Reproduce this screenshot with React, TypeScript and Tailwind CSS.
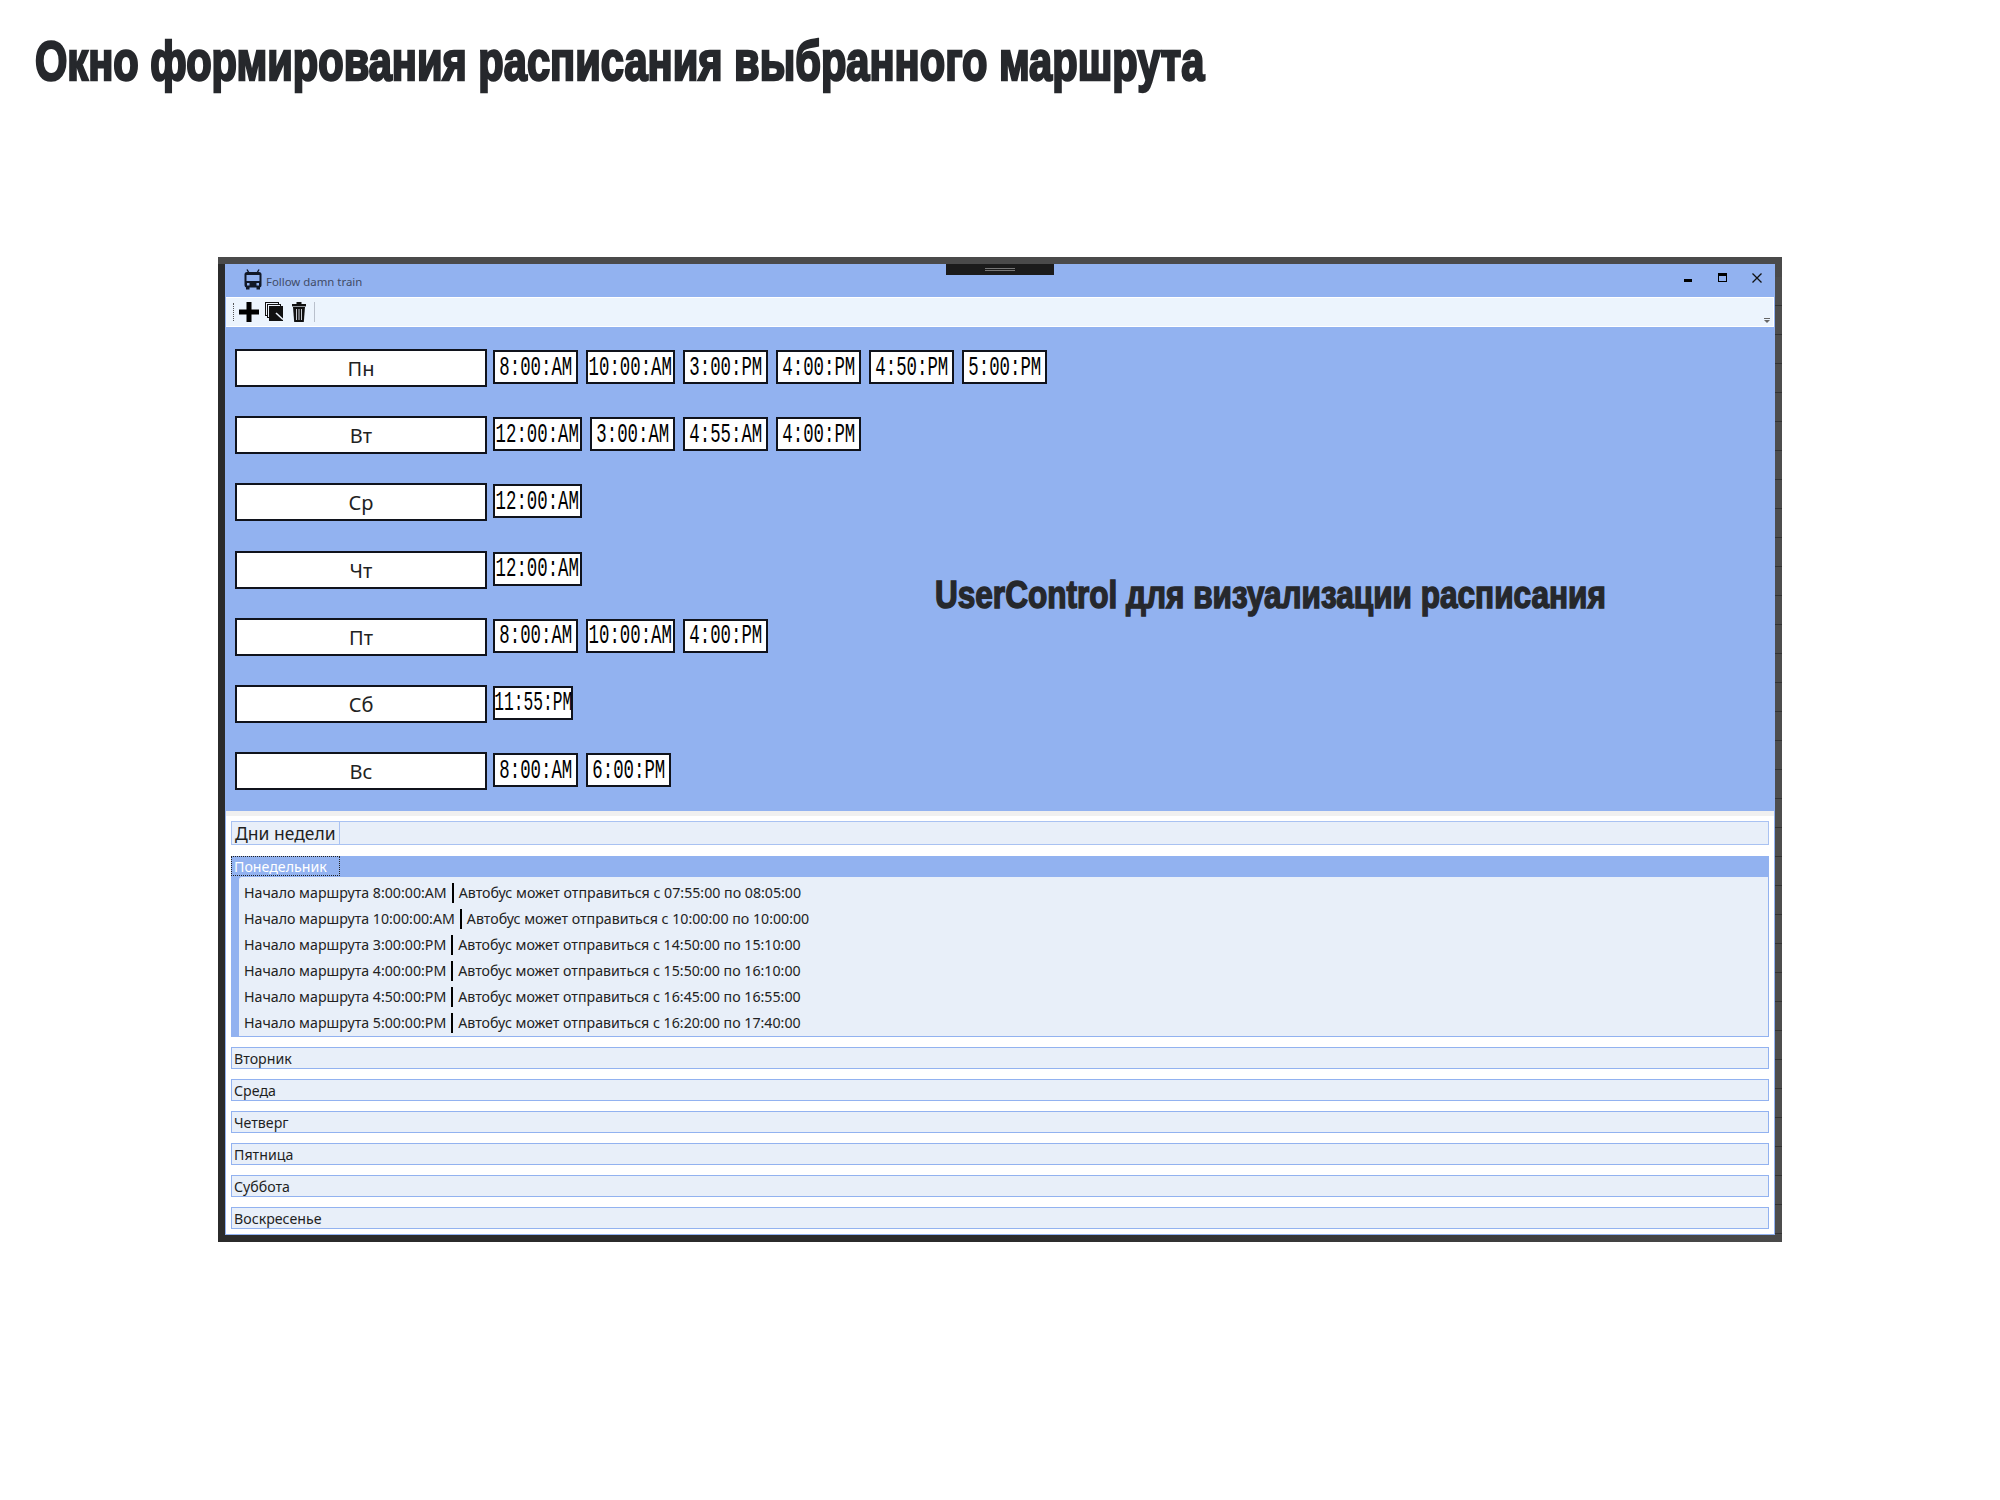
import React from 'react';

const monday = [
  ['8:00:00:AM', '07:55:00', '08:05:00'],
  ['10:00:00:AM', '10:00:00', '10:00:00'],
  ['3:00:00:PM', '14:50:00', '15:10:00'],
  ['4:00:00:PM', '15:50:00', '16:10:00'],
  ['4:50:00:PM', '16:45:00', '16:55:00'],
  ['5:00:00:PM', '16:20:00', '17:40:00'],
];

const schedule = [
  { day: 'Пн', times: ['8:00:AM', '10:00:AM', '3:00:PM', '4:00:PM', '4:50:PM', '5:00:PM'] },
  { day: 'Вт', times: ['12:00:AM', '3:00:AM', '4:55:AM', '4:00:PM'] },
  { day: 'Ср', times: ['12:00:AM'] },
  { day: 'Чт', times: ['12:00:AM'] },
  { day: 'Пт', times: ['8:00:AM', '10:00:AM', '4:00:PM'] },
  { day: 'Сб', times: ['11:55:PM'] },
  { day: 'Вс', times: ['8:00:AM', '6:00:PM'] },
];

const collapsed = ['Вторник', 'Среда', 'Четверг', 'Пятница', 'Суббота', 'Воскресенье'];

// width depends on the leading digits, same as the autosized control in the shot
const clockWidth = (t: string) => {
  if (t.startsWith('11')) return 'w-[80px]';
  if (t.startsWith('10') || t.startsWith('12')) return 'w-[89px]';
  return 'w-[85px]';
};

const BusIcon = () => (
  <svg width="20" height="22" viewBox="0 0 20 22">
    <path d="M6 4 L4 0.5 M14 4 L16 0.5" stroke="#111827" strokeWidth="1.4" />
    <rect x="1.5" y="3" width="17" height="15.5" rx="2.5" fill="#111827" />
    <rect x="3.5" y="6" width="13" height="6" fill="#92b2f0" />
    <rect x="4" y="14" width="2.5" height="2.5" fill="#92b2f0" />
    <rect x="13.5" y="14" width="2.5" height="2.5" fill="#92b2f0" />
    <rect x="3" y="18" width="3.5" height="2.5" fill="#111827" />
    <rect x="13.5" y="18" width="3.5" height="2.5" fill="#111827" />
  </svg>
);

const CopyIcon = () => (
  <svg width="20" height="20" viewBox="0 0 20 20">
    <rect x="0.5" y="0.5" width="13" height="13" fill="#eef4fd" stroke="#111" />
    <rect x="2.5" y="2.5" width="13" height="13" fill="#eef4fd" stroke="#111" />
    <rect x="4" y="4" width="14" height="15" fill="#111" />
    <path d="M11 11 L18 17.5" stroke="#eef4fd" strokeWidth="1.6" />
  </svg>
);

const TrashIcon = () => (
  <svg width="14" height="20" viewBox="0 0 14 20">
    <rect x="0" y="2" width="14" height="2.4" fill="#111" />
    <rect x="4.5" y="0" width="5" height="2.4" fill="#111" />
    <path d="M1 5 H13 L11.8 20 H2.2 Z" fill="#111" />
    <path d="M4.5 7 V18 M7 7 V18 M9.5 7 V18" stroke="#c9cdd4" strokeWidth="1" />
  </svg>
);

const App: React.FC = () => {
  return (
    <div className="w-[2000px] h-[1500px] bg-white font-['Noto_Sans',sans-serif] text-[#1f1f1f] overflow-hidden">
      {/* Slide heading */}
      <div className="h-[257px] pl-[35px] pt-[28px]">
        <h1 className="origin-left scale-x-[0.743] font-['Liberation_Sans',sans-serif] font-bold text-[56px] leading-[66px] text-[#26282c] whitespace-nowrap [-webkit-text-stroke:2.5px_#26282c]">
          Окно формирования расписания выбранного маршрута
        </h1>
      </div>

      {/* Screenshot frame */}
      <div className="relative ml-[218px] w-[1564px] h-[985px] bg-[linear-gradient(to_right,#2b2b2b_0,#2b2b2b_50%,#4a4a4a_100%)] px-[7px] py-[7px]">
        <div className="absolute right-0 top-[20px] bottom-[7px] w-[7px] bg-[repeating-linear-gradient(to_bottom,#4d4d4d_0,#4d4d4d_28px,#333333_28px,#333333_29px)]" />
        <div className="absolute left-0 right-0 top-0 h-[7px] bg-[#4a4a4a]" />
        <div className="relative flex flex-col h-[971px] bg-white border-b border-x border-[#92b2f0]">
          <div className="absolute left-1/2 -translate-x-1/2 top-0 w-[108px] h-[11px] bg-[#1b1b1b] flex justify-center pt-[4px]">
            <div className="w-[30px] h-[3px] border-y border-[#777]" />
          </div>

          {/* Title bar */}
          <div className="flex items-center h-[33px] bg-[#92b2f0] pl-[17px] pr-[12px]">
            <div className="-mt-[2px]"><BusIcon /></div>
            <span className="ml-[3px] mt-[2px] text-[11.4px] text-[#3f4a66]">Follow damn train</span>
            <div className="ml-auto flex items-center text-black">
              <div className="w-[8px] h-[3px] bg-black mr-[26px]" />
              <div className="w-[9px] h-[9px] border border-black border-t-[3px] mr-[25px] -mt-[6px]" />
              <svg width="10" height="10" viewBox="0 0 10 10" className="-mt-[6px]">
                <path d="M0.5 0.5 L9.5 9.5 M9.5 0.5 L0.5 9.5" stroke="#111" strokeWidth="1.3" />
              </svg>
            </div>
          </div>

          {/* Toolbar */}
          <div className="relative flex items-center h-[30px] bg-[#ecf4fd] border-y border-white pl-[7px] mr-[1px]">
            <div className="w-[1px] h-[18px] border-l border-dotted border-[#555]" />
            <svg width="20" height="20" viewBox="0 0 20 20" className="ml-[5px]">
              <path d="M7.5 0 H12.5 V7.5 H20 V12.5 H12.5 V20 H7.5 V12.5 H0 V7.5 H7.5 Z" fill="#000" />
            </svg>
            <div className="ml-[6px]"><CopyIcon /></div>
            <div className="ml-[7px]"><TrashIcon /></div>
            <div className="ml-[8px] w-[1px] h-[20px] bg-[#b9c0cc]" />
            <div className="absolute right-[3px] bottom-[3px] flex flex-col items-center gap-[1px]">
              <div className="w-[6px] h-[1px] bg-[#666]" />
              <div className="w-0 h-0 border-x-[3px] border-x-transparent border-t-[3px] border-t-[#666]" />
            </div>
          </div>

          {/* Schedule visualisation */}
          <div className="relative h-[484px] bg-[#92b2f0] pl-[9px] pt-[22px] flex flex-col gap-[29.2px]">
            {schedule.map((row) => (
              <div key={row.day} className="flex items-center h-[38px]">
                <div className="w-[252px] h-[38px] bg-white border-2 border-[#10131c] flex items-center justify-center text-[20px] text-[#222] pt-[2px]">
                  {row.day}
                </div>
                <div className="flex gap-[8px] ml-[6px] -mt-[2px]">
                  {row.times.map((t, i) => (
                    <div
                      key={i}
                      className={`${clockWidth(t)} h-[34px] bg-white border-2 border-[#10131c] flex items-center justify-center pt-[1px] font-['Liberation_Mono',monospace] text-[28px] text-black`}
                    >
                      <span className={`${t.startsWith('11') ? 'scale-x-[0.58]' : 'scale-x-[0.62]'} whitespace-nowrap`}>{t}</span>
                    </div>
                  ))}
                </div>
              </div>
            ))}
            <div className="absolute left-[709px] top-[246px] origin-left scale-x-[0.83] font-['Liberation_Sans',sans-serif] font-bold text-[38px] leading-[44px] text-[#26282c] whitespace-nowrap [-webkit-text-stroke:1.5px_#26282c]">
              UserControl для визуализации расписания
            </div>
          </div>

          {/* Day list */}
          <div className="h-[5px] bg-[#f0f0f0]" />
          <div className="flex flex-col px-[5px] pt-[5px]">
            <div className="flex h-[24px] bg-[#e8eff9] border border-[#a9c2f2] text-[17.5px] leading-[23px]">
              <div className="w-[108px] pl-[3px] border-r border-[#a9c2f2] whitespace-nowrap">Дни недели</div>
            </div>

            <div className="mt-[11px] h-[181px] bg-[#92b2f0] border border-[#92b2f0] flex flex-col">
              <div className="h-[20px] text-[14.2px] leading-[20px] text-white">
                <span className="inline-block h-[20px] w-[109px] pl-[2px] border border-dotted border-[#222] -mt-[1px] -ml-[1px]">
                  Понедельник
                </span>
              </div>
              <div className="flex-1 ml-[7px] bg-[#e8eff9] rounded-tl-[3px] pl-[5px] pt-[3px] flex flex-col">
                {monday.map(([start, from, to]) => (
                  <div key={start} className="flex items-center h-[26px] text-[14.2px] whitespace-nowrap text-[#222]">
                    <span>Начало маршрута {start}</span>
                    <div className="w-[2px] h-[20px] bg-black mx-[5px]" />
                    <span>Автобус может отправиться с {from} по {to}</span>
                  </div>
                ))}
              </div>
            </div>

            <div className="mt-[10px] flex flex-col gap-[10px]">
              {collapsed.map((d) => (
                <div key={d} className="h-[22px] bg-[#e8eff9] border border-[#92b2f0] pl-[2px] text-[14.2px] leading-[21px]">
                  {d}
                </div>
              ))}
            </div>
          </div>
        </div>
      </div>
    </div>
  );
};

export default App;
